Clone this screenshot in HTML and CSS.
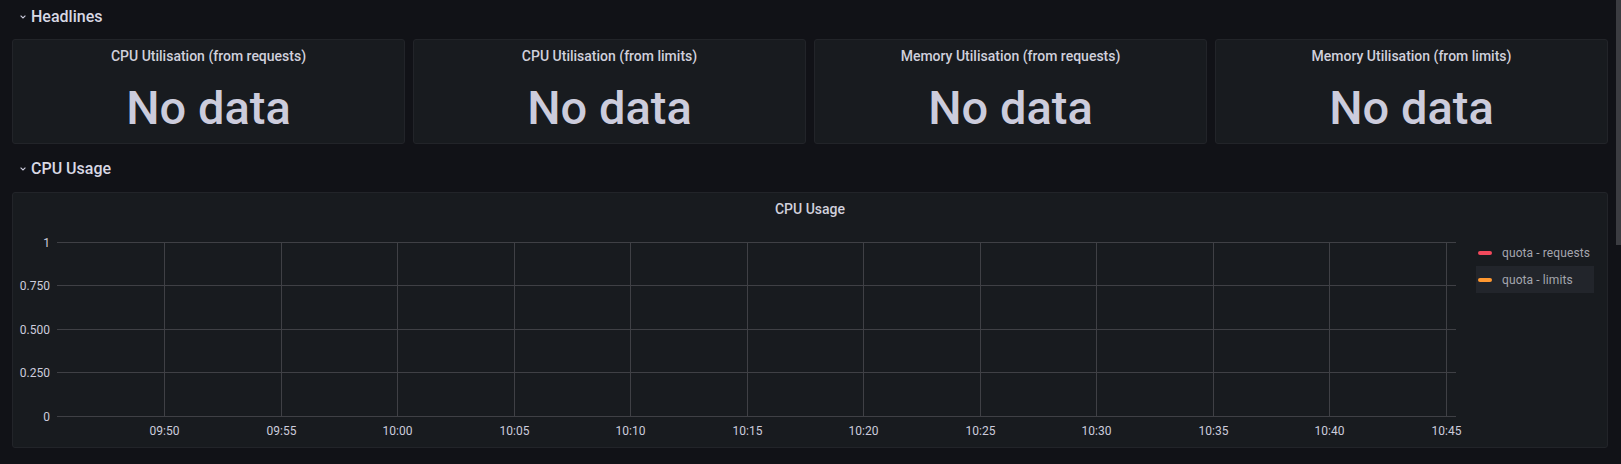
FILE: index.html
```html
<!DOCTYPE html>
<html>
<head>
<meta charset="utf-8">
<link rel="stylesheet" href="styles.css">
</head>
<body>
<div class="main">
  <div class="row-header">
    <svg class="chev" width="6" height="4" viewBox="0 0 6 4"><path d="M0.6 0.6 L3 3 L5.4 0.6" fill="none" stroke="#ccccdc" stroke-width="1.1"/></svg>
    <span>Headlines</span>
  </div>
  <div class="stats">
    <div class="panel">
      <div class="panel-title">CPU Utilisation (from requests)</div>
      <div class="stat-value">No data</div>
    </div>
    <div class="panel">
      <div class="panel-title">CPU Utilisation (from limits)</div>
      <div class="stat-value">No data</div>
    </div>
    <div class="panel">
      <div class="panel-title">Memory Utilisation (from requests)</div>
      <div class="stat-value">No data</div>
    </div>
    <div class="panel">
      <div class="panel-title">Memory Utilisation (from limits)</div>
      <div class="stat-value">No data</div>
    </div>
  </div>
  <div class="row-header second">
    <svg class="chev" width="6" height="4" viewBox="0 0 6 4"><path d="M0.6 0.6 L3 3 L5.4 0.6" fill="none" stroke="#ccccdc" stroke-width="1.1"/></svg>
    <span>CPU Usage</span>
  </div>
  <div class="panel graph">
    <div class="panel-title">CPU Usage</div>
    <div class="graph-body">
      <svg class="chart" width="1460" height="222" viewBox="0 0 1460 222">
        <g class="grid">
          <line x1="44" x2="1443" y1="17.5" y2="17.5"/>
          <line x1="44" x2="1443" y1="60.5" y2="60.5"/>
          <line x1="44" x2="1443" y1="104.5" y2="104.5"/>
          <line x1="44" x2="1443" y1="147.5" y2="147.5"/>
          <line x1="44" x2="1443" y1="191.5" y2="191.5"/>
          <line x1="151.5" x2="151.5" y1="17" y2="192"/>
          <line x1="268.5" x2="268.5" y1="17" y2="192"/>
          <line x1="384.5" x2="384.5" y1="17" y2="192"/>
          <line x1="501.5" x2="501.5" y1="17" y2="192"/>
          <line x1="617.5" x2="617.5" y1="17" y2="192"/>
          <line x1="734.5" x2="734.5" y1="17" y2="192"/>
          <line x1="850.5" x2="850.5" y1="17" y2="192"/>
          <line x1="967.5" x2="967.5" y1="17" y2="192"/>
          <line x1="1083.5" x2="1083.5" y1="17" y2="192"/>
          <line x1="1200.5" x2="1200.5" y1="17" y2="192"/>
          <line x1="1316.5" x2="1316.5" y1="17" y2="192"/>
          <line x1="1433.5" x2="1433.5" y1="17" y2="192"/>
        </g>
        <g class="ylabels">
          <text x="37" y="21.5">1</text>
          <text x="37" y="64.5">0.750</text>
          <text x="37" y="108.5">0.500</text>
          <text x="37" y="151.5">0.250</text>
          <text x="37" y="195.5">0</text>
        </g>
        <g class="xlabels">
          <text x="151.5" y="210">09:50</text>
          <text x="268.5" y="210">09:55</text>
          <text x="384.5" y="210">10:00</text>
          <text x="501.5" y="210">10:05</text>
          <text x="617.5" y="210">10:10</text>
          <text x="734.5" y="210">10:15</text>
          <text x="850.5" y="210">10:20</text>
          <text x="967.5" y="210">10:25</text>
          <text x="1083.5" y="210">10:30</text>
          <text x="1200.5" y="210">10:35</text>
          <text x="1316.5" y="210">10:40</text>
          <text x="1433.5" y="210">10:45</text>
        </g>
      </svg>
      <div class="legend">
        <div class="legend-item"><span class="swatch red"></span><span>quota - requests</span></div>
        <div class="legend-item active"><span class="swatch orange"></span><span>quota - limits</span></div>
      </div>
    </div>
  </div>
</div>
<div class="scrollbar"><div class="thumb"></div></div>
</body>
</html>
```

FILE: styles.css
```css
html, body {
  margin: 0;
  padding: 0;
}
body {
  width: 1621px;
  height: 464px;
  overflow: hidden;
  background: #111217;
  color: #ccccdc;
  font-family: Roboto, "Liberation Sans", sans-serif;
  display: flex;
}
.main {
  flex: 1;
  padding: 0 8px 0 12px;
  display: flex;
  flex-direction: column;
}
.scrollbar {
  width: 5px;
  flex: none;
}
.thumb {
  height: 245px;
  background: #3b3c41;
}
.row-header {
  height: 32px;
  display: flex;
  align-items: center;
  gap: 5px;
  padding-left: 8px;
  font-size: 16px;
  font-weight: 500;
  color: #d8d8e4;
}
.row-header .chev {
  display: block;
  margin-top: 1px;
}
.row-header.second {
  margin-top: 8px;
}
.stats {
  margin-top: 7px;
  height: 105px;
  display: grid;
  grid-template-columns: repeat(4, 1fr);
  gap: 8px;
}
.panel {
  box-sizing: border-box;
  background: #181b1f;
  border: 1px solid #222429;
  border-radius: 3px;
  display: flex;
  flex-direction: column;
}
.panel-title {
  height: 32px;
  line-height: 32px;
  text-align: center;
  font-size: 14px;
  font-weight: 500;
  color: #d0d0dc;
  flex: none;
}
.stat-value {
  flex: 1;
  display: flex;
  align-items: center;
  justify-content: center;
  font-size: 47px;
  font-weight: 500;
  line-height: 1;
  color: #ccccdc;
  padding-bottom: 1px;
}
.graph {
  margin-top: 8px;
  height: 256px;
}
.graph-body {
  flex: 1;
  display: flex;
}
.chart {
  display: block;
  flex: none;
}
.grid line {
  stroke: #3f4045;
  stroke-width: 1;
}
.ylabels text {
  font-family: Roboto, "Liberation Sans", sans-serif;
  font-size: 12px;
  fill: #ccccdc;
  text-anchor: end;
}
.xlabels text {
  font-family: Roboto, "Liberation Sans", sans-serif;
  font-size: 12px;
  fill: #ccccdc;
  text-anchor: middle;
}
.legend {
  margin-left: 3px;
  padding-top: 14px;
  width: 118px;
  display: flex;
  flex-direction: column;
}
.legend-item {
  height: 27px;
  display: flex;
  align-items: center;
  gap: 10px;
  padding-left: 2px;
  font-size: 12px;
  letter-spacing: 0.1px;
  color: #a4a5ae;
}
.legend-item.active {
  background: #22252b;
}
.swatch {
  width: 14px;
  height: 4px;
  border-radius: 2px;
  flex: none;
}
.swatch.red {
  background: #f2495c;
}
.swatch.orange {
  background: #ff9830;
}
```
